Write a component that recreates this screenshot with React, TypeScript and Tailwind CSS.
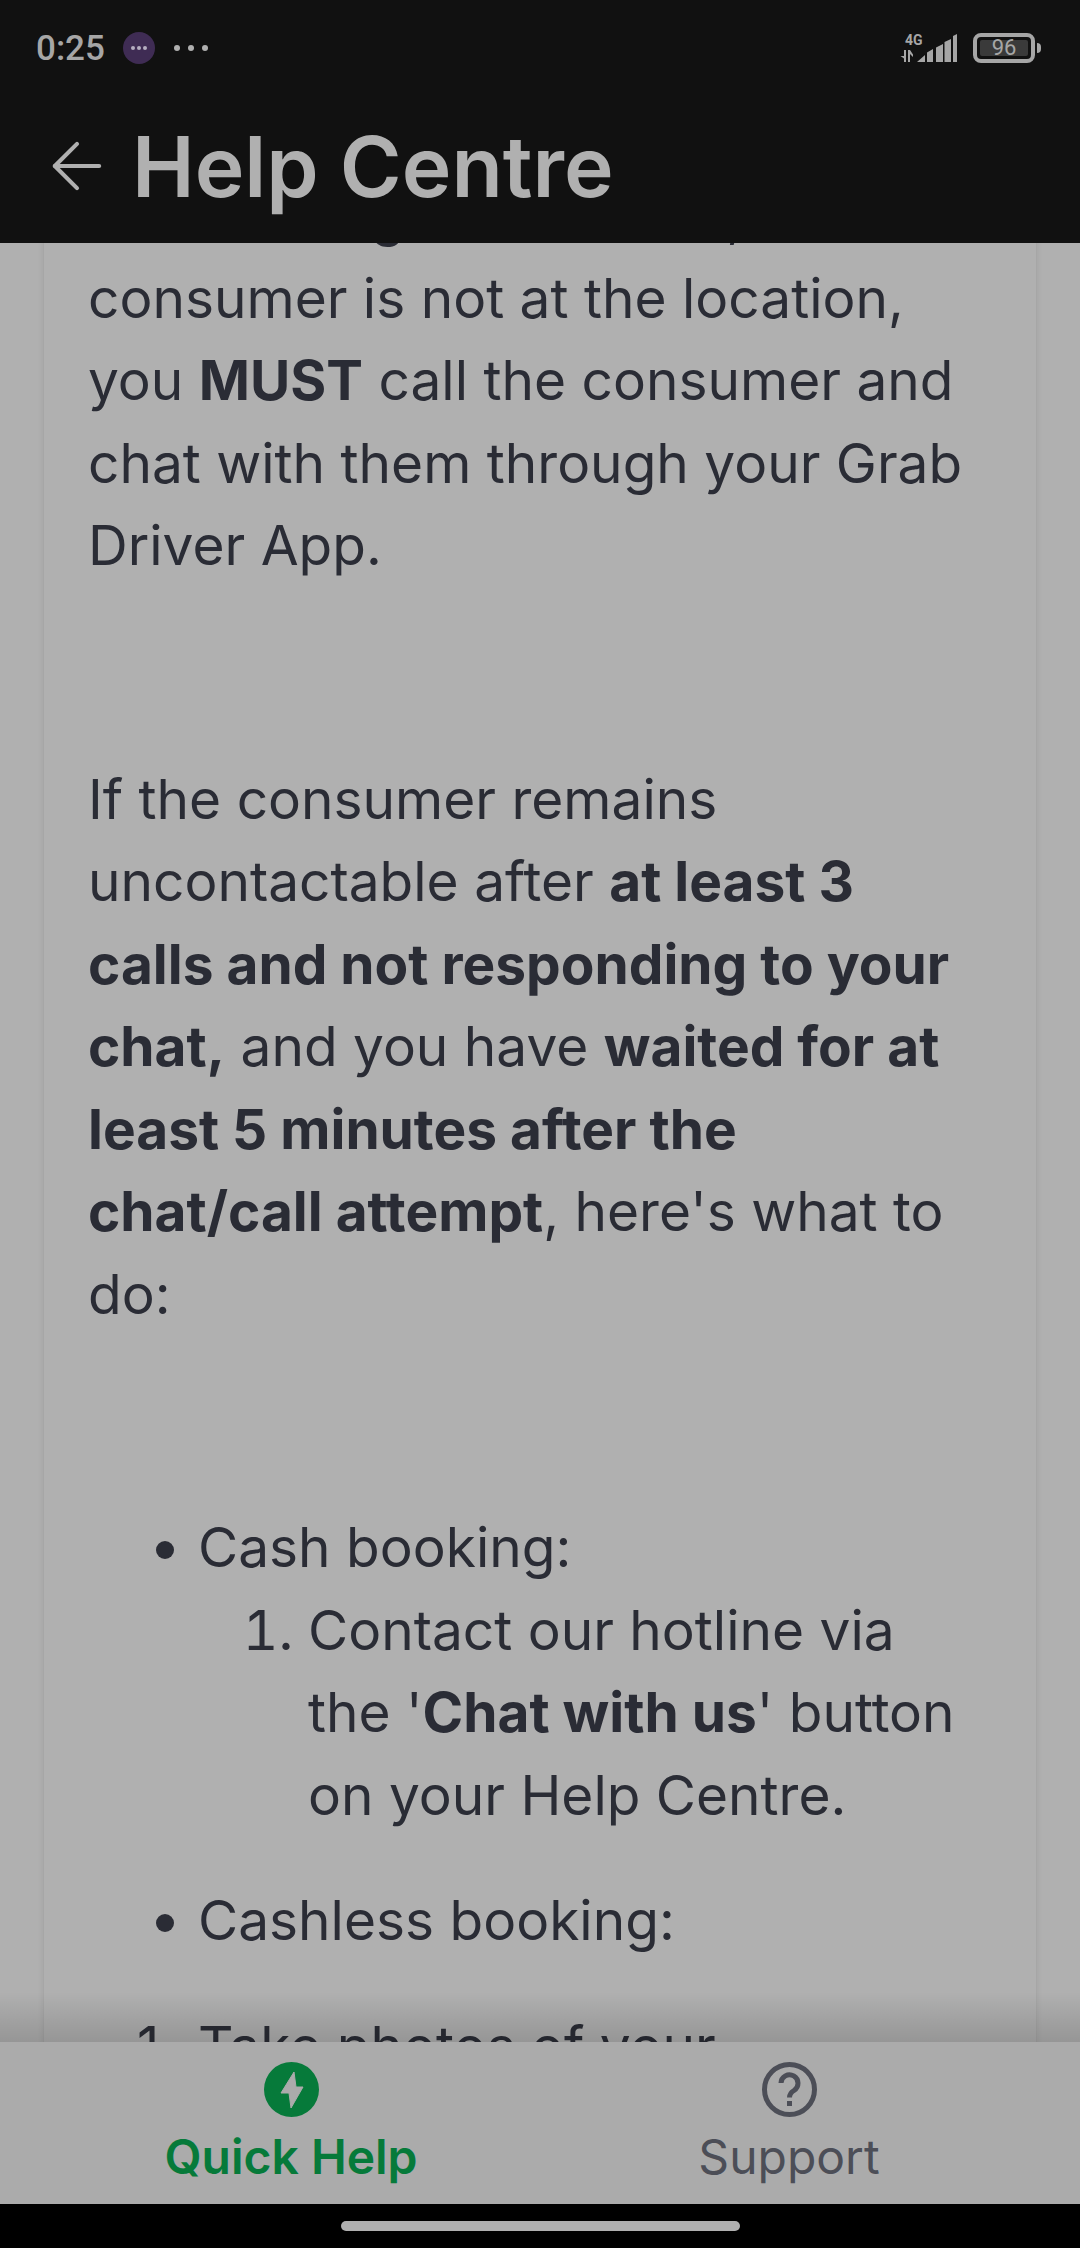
import { ArrowLeft } from 'lucide-react'

function StatusBar() {
  return (
    <div className="flex h-[96px] items-center justify-between pl-[36px] pr-[39px] text-[#a6a6a6]">
      <div className="flex items-center">
        <span className="font-['Roboto',sans-serif] text-[35px] font-medium leading-none">0:25</span>
        <span className="ml-[18px] flex h-[32px] w-[32px] items-center justify-center rounded-full bg-[#3f2c54]">
          <span className="flex gap-[2px]">
            <i className="h-[4px] w-[4px] rounded-full bg-[#b5aec0]" />
            <i className="h-[4px] w-[4px] rounded-full bg-[#b5aec0]" />
            <i className="h-[4px] w-[4px] rounded-full bg-[#b5aec0]" />
          </span>
        </span>
        <span className="ml-[19px] flex gap-[8px]">
          <i className="h-[6px] w-[6px] rounded-full bg-[#b0b0b0]" />
          <i className="h-[6px] w-[6px] rounded-full bg-[#b0b0b0]" />
          <i className="h-[6px] w-[6px] rounded-full bg-[#b0b0b0]" />
        </span>
      </div>
      <div className="flex items-center">
        <div className="relative h-[32px] w-[57px]">
          <span className="absolute left-[5px] top-[1px] font-['Roboto',sans-serif] text-[14px] font-bold leading-none">4G</span>
          <svg viewBox="0 0 57 32" className="absolute inset-0 h-[32px] w-[57px]" fill="currentColor">
            <path d="M4 18h2v12H4v-3.500L0.500 24H4zM8 18v12h2v-8l3 3v-2.500L10 18z" />
            <path d="M17 30l8-7v7zM27 30v-9.500l6-3.500v13zM36 30V15.500l7-3.500v18zM44.500 30V10l6.500-3v23zM53 30V4l4-2v28z" />
          </svg>
        </div>
        <div className="ml-[16px] flex items-center">
          <div className="flex h-[30px] w-[62px] items-center justify-center rounded-[8px] border-[4px] border-[#a6a6a6] bg-[#111111] p-[3px]">
            <span className="flex h-full w-full items-center justify-center rounded-[2px] bg-[#3a3a3a] font-['Roboto',sans-serif] text-[22px] font-normal leading-none">96</span>
          </div>
          <i className="ml-[2px] h-[10px] w-[4px] rounded-r-full bg-[#a6a6a6]" />
        </div>
      </div>
    </div>
  )
}

function Header() {
  return (
    <header className="flex h-[147px] items-start bg-[#111111] pl-[39px]">
      <ArrowLeft className="mt-[32px] h-[76px] w-[76px] text-[#b0b0b0]" strokeWidth={1.3} />
      <h1 className="ml-[17px] mt-[23px] font-['Inter',sans-serif] text-[84px] font-semibold leading-[96px] text-[#b0b0b0]">Help Centre</h1>
    </header>
  )
}

function Article() {
  return (
    <div className="mx-[43px] -mt-[69px] border-x border-[#a6a6a6] pb-[40px] pl-[44px] pr-[60px] font-['Inter',sans-serif] text-[55px] font-normal leading-[82.5px] text-[#2a2c35] shadow-[0_0_6px_rgba(0,0,0,0.08)]">
      <p>
        On reaching the address, if the consumer is not at the location, you <strong className="font-bold">MUST</strong> call the
        consumer and chat with them through your Grab Driver App.
      </p>
      <div className="h-[171px]" />
      <p>
        If the consumer remains uncontactable after <strong className="font-bold">at least 3 calls and not responding to your chat,</strong> and
        you have <strong className="font-bold">waited for at least 5 minutes after the chat/call attempt</strong>, here's what to do:
      </p>
      <div className="h-[171px]" />
      <ul className="list-disc pl-[110px]">
        <li>
          Cash booking:
          <ol className="list-decimal pl-[110px]">
            <li>
              Contact our hotline via the '<strong className="font-bold">Chat with us</strong>' button on your Help Centre.
            </li>
          </ol>
        </li>
        <li className="mt-[43px]">Cashless booking:</li>
      </ul>
      <ol className="mt-[43px] list-decimal pl-[110px]">
        <li>Take photos of your</li>
      </ol>
    </div>
  )
}

function BottomTabs() {
  return (
    <nav className="grid h-[162px] grid-cols-2 bg-[#ababab] px-[42px] font-['Inter',sans-serif] text-[48px] leading-[58px]">
      <div className="flex flex-col items-center pt-[20px] text-[#067a3a]">
        <svg viewBox="0 0 55 55" className="h-[55px] w-[55px]">
          <circle cx="27.500" cy="27.500" r="27.500" fill="currentColor" />
          <path d="M30 10 17 31h8l2 15 12-21h-7z" fill="#ababab" stroke="#ababab" strokeWidth="1" strokeLinejoin="round" />
        </svg>
        <span className="mt-[11px] font-semibold">Quick Help</span>
      </div>
      <div className="flex flex-col items-center pt-[20px] text-[#4c4e57]">
        <svg viewBox="0 0 55 55" className="h-[55px] w-[55px]" fill="none" stroke="currentColor" strokeWidth="5">
          <circle cx="27.500" cy="27.500" r="25" />
          <path d="M19 21a8.500 8.500 0 1 1 13 7.500c-3 1.800-4.500 3.400-4.500 7" />
          <path d="M27.500 39v5" />
        </svg>
        <span className="mt-[11px]">Support</span>
      </div>
    </nav>
  )
}

export default function App() {
  return (
    <div className="flex h-[2248px] w-[1080px] flex-col overflow-hidden bg-[#000]">
      <div className="relative z-10 bg-[#111111]">
        <StatusBar />
        <Header />
      </div>
      <main className="relative min-h-0 flex-1 overflow-hidden bg-[#b0b0b0]">
        <Article />
        <div className="absolute inset-x-0 bottom-0 h-[50px] bg-gradient-to-b from-transparent to-black/15" />
      </main>
      <BottomTabs />
      <div className="flex h-[44px] items-start justify-center bg-black pt-[17px]">
        <div className="h-[10px] w-[399px] rounded-full bg-[#b0b0b0]" />
      </div>
    </div>
  )
}
